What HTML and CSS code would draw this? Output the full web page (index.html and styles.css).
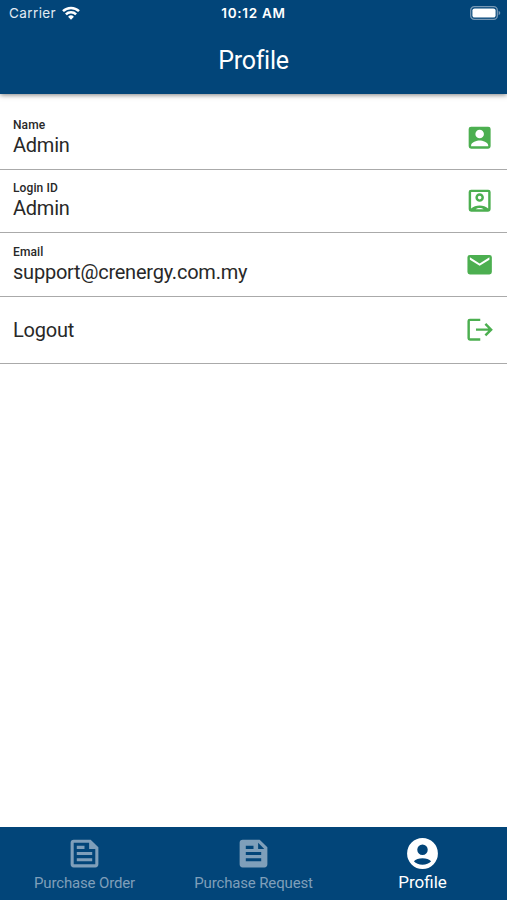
FILE: index.html
```html
<!DOCTYPE html>
<html lang="en">
<head>
<meta charset="utf-8">
<title>Profile</title>
<link rel="stylesheet" href="styles.css">
</head>
<body>
<div class="app">
  <header class="header">
    <div class="status">
      <div class="carrier"><span class="carrier-name">Carrier</span>
        <svg class="wifi" viewBox="0 0 18 14"><path d="M9 13.800 6.100 10.700a4.200 4.200 0 0 1 5.800 0z" fill="#fff"/><path d="M3.900 8.300a7.200 7.200 0 0 1 10.200 0M1 5.200a11.400 11.400 0 0 1 16 0" fill="none" stroke="#fff" stroke-width="2.500"/></svg>
      </div>
      <div class="time">10:12 AM</div>
      <svg class="battery" viewBox="0 0 31 14"><rect x=".7" y=".7" width="26.600" height="12.600" rx="3.600" fill="none" stroke="#7798b5" stroke-width="1.300"/><rect x="2.400" y="2.400" width="23.200" height="9.200" rx="2.200" fill="#fff"/><path d="M28.600 4.700q1.700.8 1.700 2.300t-1.700 2.300z" fill="#7798b5"/></svg>
    </div>
    <h1 class="title">Profile</h1>
  </header>
  <main class="list">
    <div class="row">
      <div class="field"><span class="label">Name</span><span class="value">Admin</span></div>
      <svg class="icon" viewBox="0 0 24 24"><path d="M3 5v14a2 2 0 0 0 2 2h14a2 2 0 0 0 2-2V5a2 2 0 0 0-2-2H5a2 2 0 0 0-2 2zm12.500 4a3.500 3.500 0 1 1-7 0 3.500 3.500 0 0 1 7 0zM5 18.200c0-2.300 4.700-3.800 7-3.800s7 1.500 7 3.800v.8H5z"/></svg>
    </div>
    <div class="row">
      <div class="field"><span class="label">Login ID</span><span class="value">Admin</span></div>
      <svg class="icon" viewBox="0 0 24 24"><path d="M19 3H5a2 2 0 0 0-2 2v14a2 2 0 0 0 2 2h14a2 2 0 0 0 2-2V5a2 2 0 0 0-2-2zM8.700 19c.9-.6 2-1 3.300-1s2.400.4 3.300 1zM19 18.400C17.200 16.900 14.700 16 12 16s-5.200.9-7 2.400V5h14zM12 13a3.500 3.500 0 1 0 0-7 3.500 3.500 0 0 0 0 7zm0-5a1.500 1.500 0 1 1 0 3 1.500 1.500 0 0 1 0-3z"/></svg>
    </div>
    <div class="row">
      <div class="field"><span class="label">Email</span><span class="value">support@crenergy.com.my</span></div>
      <svg class="icon" viewBox="0 0 24 24"><path d="M20 4H4a2 2 0 0 0-2 2v12a2 2 0 0 0 2 2h16a2 2 0 0 0 2-2V6a2 2 0 0 0-2-2zm0 4-8 5-8-5V6l8 5 8-5z"/></svg>
    </div>
    <div class="row row-logout">
      <div class="field"><span class="value">Logout</span></div>
      <svg class="icon" viewBox="0 0 24 24"><path d="M12.500 4H4a1 1 0 0 0-1 1v14a1 1 0 0 0 1 1h8.500M9 12h11.500M16.700 7.300l4.700 4.700-4.700 4.700" class="line"/></svg>
    </div>
  </main>
  <nav class="tabs">
    <div class="tab">
      <svg class="tab-icon" viewBox="0 0 24 24"><path d="M16 3H5a2 2 0 0 0-2 2v14a2 2 0 0 0 2 2h14a2 2 0 0 0 2-2V8zm3 16H5V5h10v4h4zM7 17h10v-2H7zm5-10H7v2h5zm-5 6h10v-2H7z"/></svg>
      <span class="tab-label">Purchase Order</span>
    </div>
    <div class="tab">
      <svg class="tab-icon" viewBox="0 0 24 24"><path d="M16 3H5a2 2 0 0 0-2 2v14a2 2 0 0 0 2 2h14a2 2 0 0 0 2-2V8zM7 7h5v2H7zm10 10H7v-2h10zm0-4H7v-2h10zm-2-4V5l4 4z"/></svg>
      <span class="tab-label">Purchase Request</span>
    </div>
    <div class="tab active">
      <svg class="tab-icon" viewBox="0 0 24 24"><path d="M12 2a10 10 0 1 0 0 20 10 10 0 0 0 0-20zm0 4.200a3.400 3.400 0 1 1 0 6.800 3.400 3.400 0 0 1 0-6.800zM6.400 17.100c1.200-1.400 3.200-2.100 5.600-2.100s4.400.7 5.600 2.100C16.300 18.500 14.300 19.300 12 19.300s-4.300-.8-5.600-2.200z"/></svg>
      <span class="tab-label">Profile</span>
    </div>
  </nav>
</div>
</body>
</html>
```
FILE: styles.css
```css
* { box-sizing: border-box; }
body { margin: 0; background: #fff; color: #282828; font-family: Roboto, sans-serif; }
.app { height: 900px; display: flex; flex-direction: column; }
.header { height: 94px; background: #024579; color: #fff; box-shadow: 0 1px 5px rgba(0, 0, 0, .5); }
.status { height: 27px; display: grid; grid-template-columns: 1fr auto 1fr; align-items: center; padding: 0 6px 0 6px; font-family: Inter, sans-serif; font-size: 13.500px; line-height: 27px; }
.carrier { display: flex; align-items: center; gap: 6px; padding-left: 3px; color: #e2ebf2; }
.carrier-name { font-size: 13.500px; letter-spacing: .4px; }
.wifi { width: 18px; height: 14px; margin-top: -1px; }
.time { font-weight: 600; letter-spacing: .7px; }
.battery { width: 31px; height: 14px; justify-self: end; margin-top: -1px; }
.title { margin: 0; font-size: 25px; font-weight: 400; letter-spacing: -.3px; line-height: 67px; text-align: center; }
.list { flex: 1; padding-top: 12px; }
.row { height: 63.500px; padding: 0 12.500px 0 13px; display: flex; justify-content: space-between; align-items: center; border-bottom: 1px solid #aaa; }
.row-logout { height: 67px; }
.field { display: flex; flex-direction: column; }
.label { font-size: 12px; line-height: 15px; font-weight: 500; letter-spacing: .1px; }
.value { font-size: 20px; line-height: 24px; letter-spacing: -.23px; }
.icon { width: 29.300px; height: 29.300px; fill: #4caf50; }
.line { fill: none; stroke: #4caf50; stroke-width: 2; }
.tabs { height: 73px; display: grid; grid-template-columns: repeat(3, 1fr); background: #024579; color: #7f9fba; }
.tab { display: flex; flex-direction: column; align-items: center; padding-top: 8px; }
.tab-icon { width: 37px; height: 37px; fill: currentColor; }
.tab-label { font-size: 15px; line-height: 22px; letter-spacing: -.15px; white-space: nowrap; }
.active { color: #fff; }
.active .tab-label { font-size: 17px; line-height: 20px; letter-spacing: 0; }
```
